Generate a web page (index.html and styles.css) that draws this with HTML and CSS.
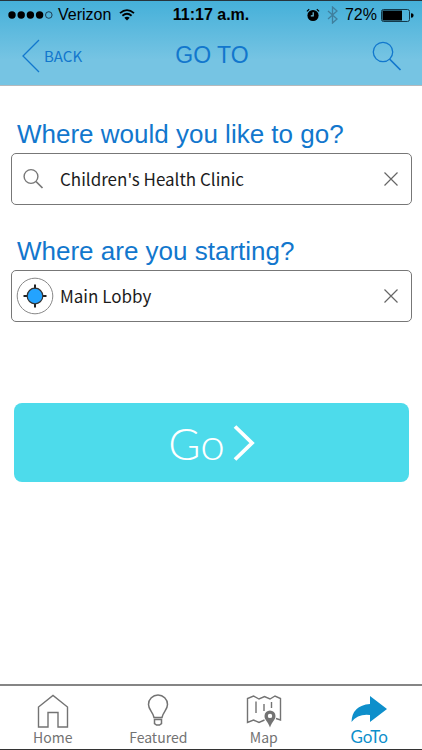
FILE: index.html
```html
<!DOCTYPE html>
<html lang="en">
<head>
<meta charset="utf-8">
<meta name="viewport" content="width=device-width, initial-scale=1">
<title>Go To</title>
<link rel="stylesheet" href="styles.css">
</head>
<body>
<header class="top">
  <div class="status">
    <div class="status-left">
      <svg width="46" height="8" viewBox="0 0 46 8" aria-hidden="true"><circle cx="4" cy="4" r="3.7"/><circle cx="13.2" cy="4" r="3.7"/><circle cx="22.4" cy="4" r="3.7"/><circle cx="31.6" cy="4" r="3.7"/><circle cx="40.8" cy="4" r="3.3" fill="none" stroke="#123" stroke-width=".8"/></svg>
      <span>Verizon</span>
      <svg class="wifi" width="16" height="12" viewBox="0 0 16 12" aria-hidden="true"><path d="M1 4.2Q8-2 15 4.2M3.4 6.8Q8 2.8 12.6 6.8" fill="none" stroke="#000" stroke-width="1.8"/><path d="M5.3 8.8Q8 6.6 10.7 8.8L8 11.6Z"/></svg>
    </div>
    <span class="clock">11:17 a.m.</span>
    <div class="status-right">
      <svg width="14" height="14" viewBox="0 0 14 14" aria-hidden="true"><circle cx="7" cy="7.5" r="5.6"/><path d="M.9 3.4 3.2 1.200M13.1 3.4 10.8 1.200" stroke="#000" stroke-width="1.2"/><path d="M7.2 4.200v3.600H4.800" fill="none" stroke="#6fc3e2" stroke-width="1.2"/></svg>
      <svg class="bluetooth" width="11" height="18" viewBox="0 0 11 18" aria-hidden="true"><path d="M1 5l9 8-4.5 4V1L10 5l-9 8" fill="none" stroke="#3f7f9d" stroke-width="1.3"/></svg>
      <span>72%</span>
      <svg width="33" height="13" viewBox="0 0 33 13" aria-hidden="true"><rect x=".5" y=".5" width="28" height="12" rx="2" fill="none" stroke="#13394a"/><path d="M1.500 1.500h19.500v10H1.500zM30 4.2q2.6 0 2.6 2.3T30 8.8z"/></svg>
    </div>
  </div>
  <nav class="bar">
    <a class="back" href="#back"><svg width="18" height="34" viewBox="0 0 18 34" aria-hidden="true"><path d="M17 1 1 17l16 16" fill="none" stroke="currentColor" stroke-width="1.3"/></svg>BACK</a>
    <h1 class="title">GO TO</h1>
    <button class="search" type="button" aria-label="Search"><svg width="30" height="30" viewBox="0 0 30 30" aria-hidden="true"><circle cx="11" cy="11" r="9.7" fill="none" stroke="currentColor" stroke-width="1.3"/><path d="m17.5 18 11 11" stroke="currentColor" stroke-width="1.7"/></svg></button>
  </nav>
</header>
<main class="content">
  <form class="form">
    <label class="question" for="destination">Where would you like to go?</label>
    <div class="field">
      <span class="field-icon"><svg width="38" height="38" viewBox="0 0 38 38" aria-hidden="true"><circle cx="15" cy="16.500" r="6.9" fill="none" stroke="#777" stroke-width="1.4"/><path d="m20 21.500 6.500 6.500" stroke="#777" stroke-width="1.7"/></svg></span>
      <input id="destination" type="text" value="Children's Health Clinic">
      <button class="clear" type="button" aria-label="Clear destination"><svg width="16" height="16" viewBox="0 0 16 16" aria-hidden="true"><path d="m1.5 1.5 13 13m0-13-13 13" stroke="#666" stroke-width="1.2"/></svg></button>
    </div>
    <label class="question" for="start">Where are you starting?</label>
    <div class="field">
      <span class="field-icon"><svg width="38" height="38" viewBox="0 0 38 38" aria-hidden="true"><circle cx="19" cy="19" r="17.8" fill="#fff" stroke="#888"/><path d="M19 7.5v23M7.5 19h23" stroke="#222" stroke-width="2"/><circle cx="19" cy="19" r="7.8" fill="#23a3ff" stroke="#333" stroke-width="1.2"/></svg></span>
      <input id="start" type="text" value="Main Lobby">
      <button class="clear" type="button" aria-label="Clear starting point"><svg width="16" height="16" viewBox="0 0 16 16" aria-hidden="true"><path d="m1.5 1.5 13 13m0-13-13 13" stroke="#666" stroke-width="1.2"/></svg></button>
    </div>
    <button class="go" type="button">Go<svg width="22" height="38" viewBox="0 0 22 38" aria-hidden="true"><path d="M2 2.5 19 19 2 35.5" fill="none" stroke="#fff" stroke-width="3.8"/></svg></button>
  </form>
</main>
<nav class="tabs">
  <a class="tab" href="#home"><svg width="32" height="34" viewBox="0 0 32 34" aria-hidden="true"><path d="M1.5 33V13L16 1.5 30.5 13v20H21V18.500H11V33Z" fill="none" stroke="currentColor" stroke-width="1.4"/></svg>Home</a>
  <a class="tab" href="#featured"><svg width="22" height="34" viewBox="0 0 22 34" aria-hidden="true"><path d="M7 23.500C6 18 1.500 16 1.500 10.500a9.500 9.500 0 0 1 19 0C20.500 16 16 18 15 23.500ZM7.500 25.500h7v4l-2 1.500h-3l-2-1.500Z" fill="none" stroke="currentColor" stroke-width="1.5"/></svg>Featured</a>
  <a class="tab" href="#map"><svg width="36" height="34" viewBox="0 0 36 34" aria-hidden="true"><path d="M18.500 26 13 28.500 7.500 26 1.500 28.500V4.500L7.500 2 13 5l5.500-2.500L24 5l5-3 5.500 2.500V26l-4.500-1.500M10 7.500V19M18 10v7M25.500 8v6" fill="none" stroke="currentColor" stroke-width="1.4"/><path fill-rule="evenodd" d="M24 33.500C22 27.500 18.500 26 18.500 22a5.500 5.500 0 0 1 11 0C29.500 26 26 27.500 24 33.500Zm0-13.800a2.200 2.200 0 1 0 0 4.400 2.200 2.200 0 0 0 0-4.400Z" fill="currentColor"/></svg>Map</a>
  <a class="tab active" href="#goto" aria-current="page"><svg width="38" height="34" viewBox="0 0 38 34" aria-hidden="true"><path d="M20 2 37 15 20 28V21Q8 19.500 1.500 28 2 11.500 20 10Z" fill="currentColor"/></svg>GoTo</a>
</nav>
</body>
</html>
```
FILE: styles.css
```css
* { box-sizing: border-box; }
body {
  margin: 0;
  min-height: 100vh;
  display: flex;
  flex-direction: column;
  background: #fff;
  font-family: "Liberation Sans", Arial, sans-serif;
}
svg { display: block; flex: none; }
a { text-decoration: none; }
button {
  border: 0;
  padding: 0;
  background: none;
  font: inherit;
  color: inherit;
}
.top {
  border-top: 1px solid #26343c;
  border-bottom: 1px solid #b5b9bc;
  background: linear-gradient(#45b0d9, #76c4e3 70%);
}
.status {
  display: grid;
  grid-template-columns: 1fr auto 1fr;
  align-items: center;
  height: 28px;
  padding: 0 8px;
  font-size: 16px;
  color: #000;
}
.status-left, .status-right {
  display: flex;
  align-items: center;
  gap: 4px;
}
.status-right { justify-content: flex-end; }
.wifi { margin-left: 4px; }
.bluetooth { margin: 0 3px; }
.clock { font-weight: 700; }
.bar {
  display: grid;
  grid-template-columns: 1fr auto 1fr;
  align-items: center;
  height: 56px;
  padding: 0 20px 3px 22px;
  color: #1277cd;
}
.back {
  display: flex;
  align-items: center;
  gap: 4px;
  font: 15px "Noto Sans CJK SC", sans-serif;
  color: inherit;
}
.title {
  margin: 0;
  font-size: 23px;
  font-weight: 400;
}
.search { justify-self: end; }
.content { flex: 1; padding: 30px 10px 32px 11px; }
.form { display: flex; flex-direction: column; }
.question {
  padding-left: 6px;
  padding-bottom: 1px;
  font-size: 26px;
  line-height: 36px;
  color: #1277cd;
}
.field {
  display: flex;
  align-items: center;
  height: 52px;
  margin-bottom: 28px;
  padding: 0 12px 0 4px;
  border: 1px solid #777;
  border-radius: 5px;
}
.field-icon {
  display: flex;
  justify-content: center;
  width: 38px;
}
.field input {
  flex: 1;
  min-width: 0;
  border: 0;
  padding: 0 0 2px 6px;
  background: none;
  font: 17px "Noto Sans CJK SC", sans-serif;
  color: #1c1c1c;
  outline: 0;
}
.go {
  display: flex;
  align-items: center;
  justify-content: center;
  gap: 8px;
  height: 79px;
  margin: 53px 3px 0;
  border-radius: 8px;
  background: #4ddbeb;
  font: 300 44px Lato, sans-serif;
  color: #fff;
}
.tabs {
  display: grid;
  grid-template-columns: repeat(4, 1fr);
  height: 66px;
  padding-top: 8px;
  border-top: 2px solid #858585;
  border-bottom: 1px solid #333;
}
.tab {
  display: flex;
  flex-direction: column;
  align-items: center;
  font: 14px/18px "Noto Sans CJK SC", sans-serif;
  color: #737373;
}
.tab.active {
  font-family: Lato, sans-serif;
  font-size: 17px;
  color: #0e8fcb;
}
```
